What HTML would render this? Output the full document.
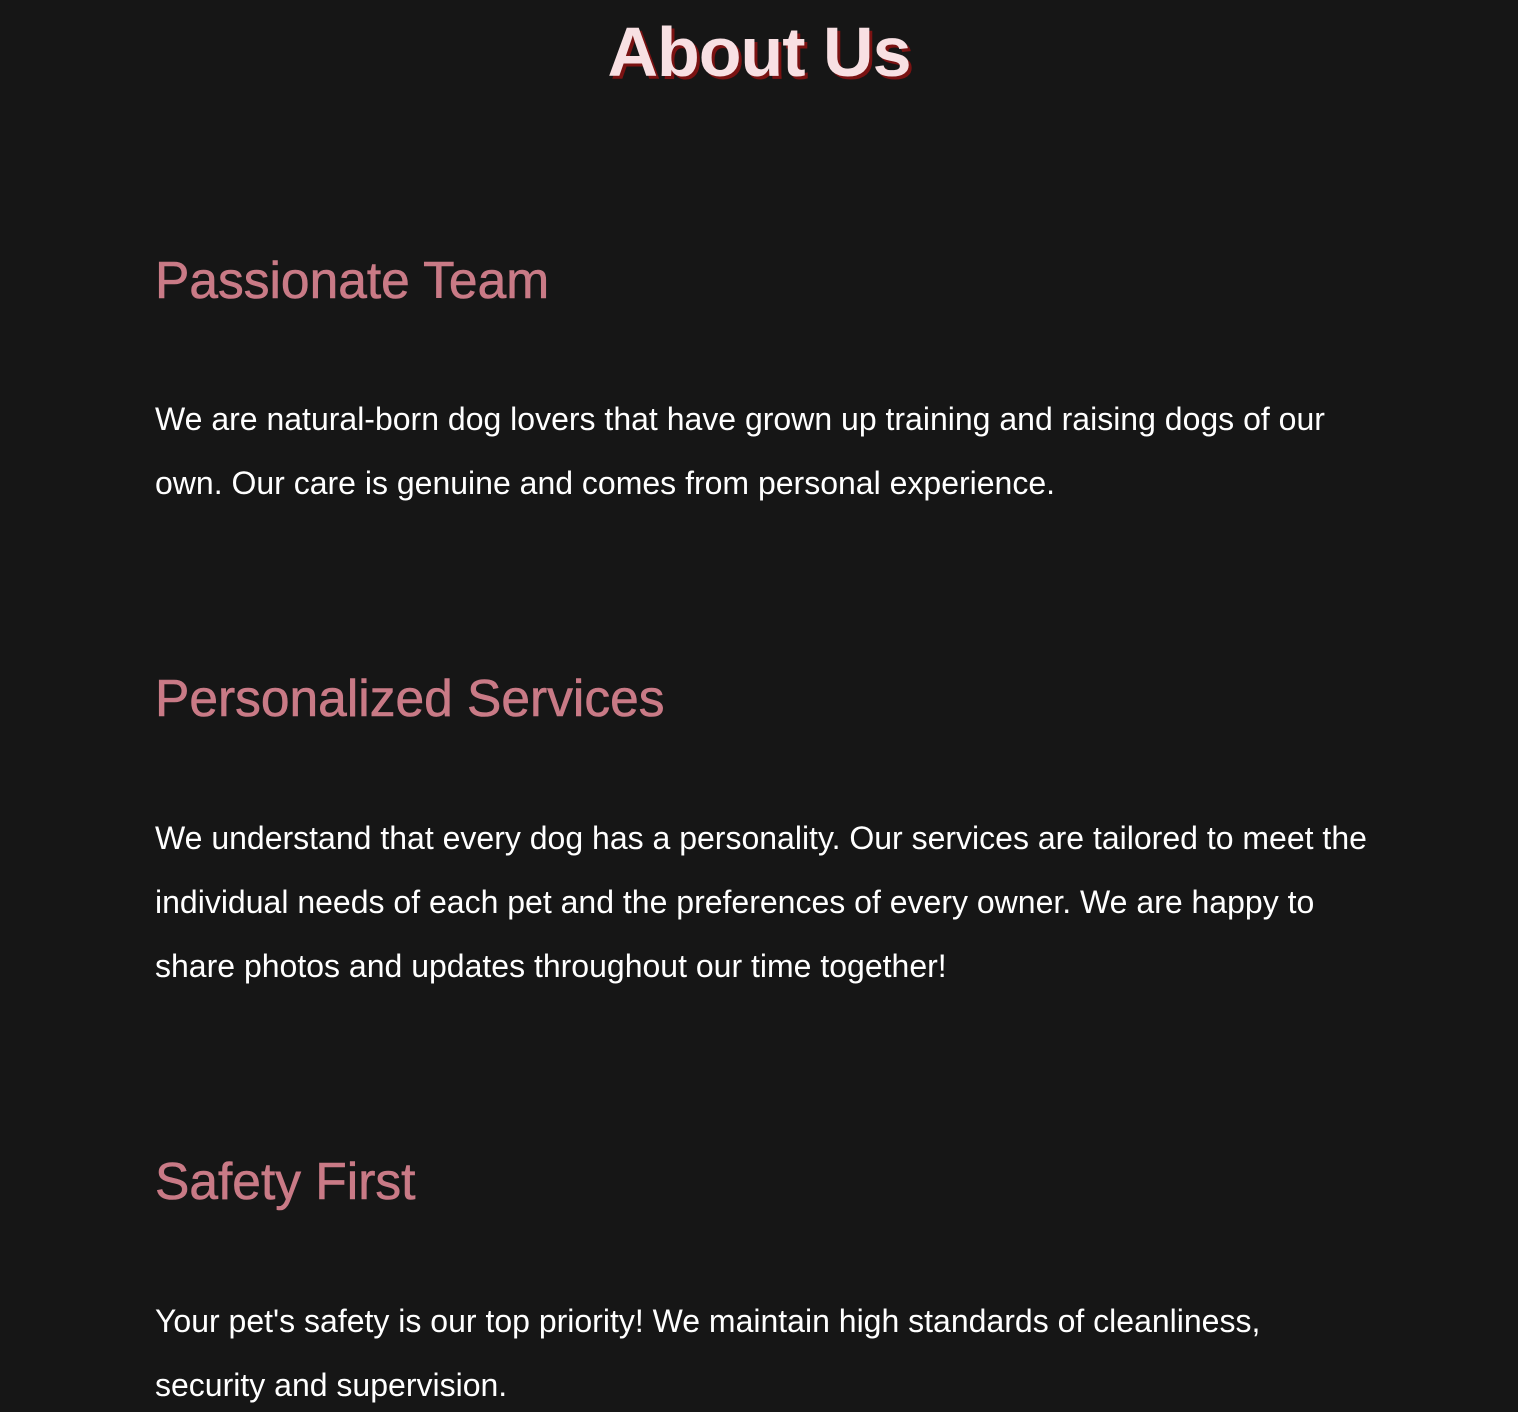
<!DOCTYPE html>
<html><head><style>
html,body{margin:0;background:#161616;width:1518px;height:1412px;overflow:hidden;font-family:"Liberation Sans",Arial,sans-serif}
.a{position:absolute;white-space:nowrap;line-height:1}
h1{position:absolute;margin:0;left:0;width:1518px;text-align:center;top:17px;font-size:70px;font-weight:bold;color:#f8e0e3;text-shadow:3px 3px 0 #7a1212;letter-spacing:-1px;line-height:1}
.h{font-size:51.5px;color:#c97a86;left:155px;-webkit-text-stroke:0.6px #c97a86}
.p{font-size:32px;color:#fff;left:155px}
</style></head><body>
<h1>About Us</h1>
<div class="a h" style="top:255px">Passionate Team</div>
<div class="a p" style="top:403px">We are natural-born dog lovers that have grown up training and raising dogs of our</div>
<div class="a p" style="top:467px">own. Our care is genuine and comes from personal experience.</div>
<div class="a h" style="top:673px">Personalized Services</div>
<div class="a p" style="top:822px">We understand that every dog has a personality. Our services are tailored to meet the</div>
<div class="a p" style="top:886px">individual needs of each pet and the preferences of every owner. We are happy to</div>
<div class="a p" style="top:950px">share photos and updates throughout our time together!</div>
<div class="a h" style="top:1156px">Safety First</div>
<div class="a p" style="top:1305px">Your pet's safety is our top priority! We maintain high standards of cleanliness,</div>
<div class="a p" style="top:1369px">security and supervision.</div>
</body></html>
